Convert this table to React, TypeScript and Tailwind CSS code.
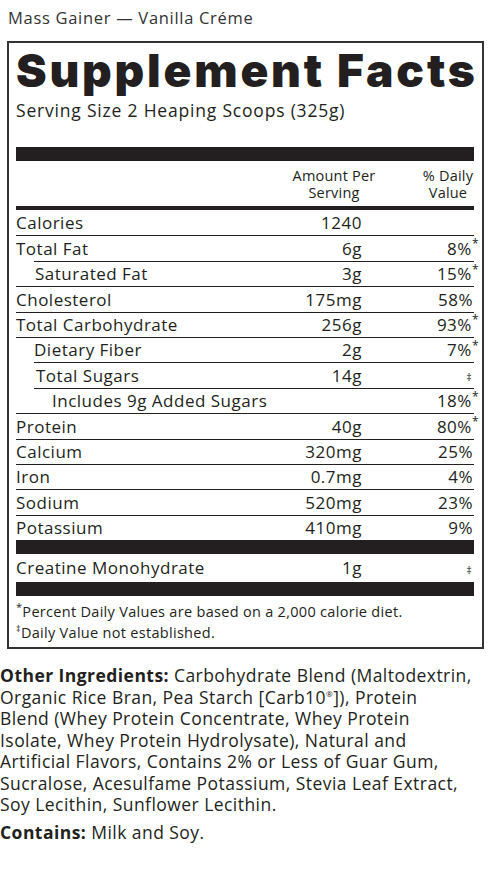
const rows = [
  { label: "Calories", amount: "1240", dv: "", first: true },
  { label: "Total Fat", amount: "6g", dv: "8%", star: true },
  { label: "Saturated Fat", amount: "3g", dv: "15%", star: true, indentLine: true, indent: "pl-px" },
  { label: "Cholesterol", amount: "175mg", dv: "58%" },
  { label: "Total Carbohydrate", amount: "256g", dv: "93%", star: true },
  { label: "Dietary Fiber", amount: "2g", dv: "7%", star: true, indent: "pl-[18px]" },
  { label: "Total Sugars", amount: "14g", dv: "", dagger: true, indentLine: true, indent: "pl-[2px]" },
  { label: "Includes 9g Added Sugars", amount: "", dv: "18%", star: true, indentLine: true, indent: "pl-[18px]" },
  { label: "Protein", amount: "40g", dv: "80%", star: true },
  { label: "Calcium", amount: "320mg", dv: "25%" },
  { label: "Iron", amount: "0.7mg", dv: "4%" },
  { label: "Sodium", amount: "520mg", dv: "23%" },
  { label: "Potassium", amount: "410mg", dv: "9%" },
];

export default function App() {
  return (
    <div className="w-[500px] min-h-[878px] bg-white text-[#231f20]">
      {/* Product name */}
      <div className="h-[41px] pl-2 pt-[7px] text-[16.5px] leading-[22px] tracking-[0.7px] text-[#333] font-['Open_Sans',sans-serif]">
        Mass Gainer — Vanilla Créme
      </div>

      {/* Label */}
      <div className="ml-[7px] w-[477px] border-2 border-[#333] pl-[7px] pr-[8px] font-['Open_Sans',sans-serif] tracking-[0.5px]">
        <h1 className="pt-[4px] text-[46px] leading-[46px] font-black tracking-[2.8px] whitespace-nowrap font-['Inter',sans-serif]">Supplement Facts</h1>
        <p className="mt-[7px] text-[17.5px] leading-[20px] tracking-[0.8px]">Serving Size 2 Heaping Scoops (325g)</p>

        <div className="mt-[27px] h-[14px] bg-[#231f20]" />

        {/* Column header */}
        <div className="flex h-[45px] items-center justify-end text-[14.5px] leading-[17px] tracking-[0.2px]">
          <div className="w-[92px] text-center">Amount Per<br />Serving</div>
          <div className="ml-[42px] w-[52px] text-center">% Daily<br />Value</div>
        </div>
        <div className="h-[4px] bg-[#231f20]" />

        {/* Nutrient rows */}
        {rows.map((r) => (
          <div
            key={r.label}
            className={`flex h-[25.4px] items-center text-[17px] ${r.first ? "" : "border-t border-[#231f20]"} ${r.indentLine ? "ml-[18px]" : ""}`}
          >
            <div className={`flex-1 whitespace-nowrap ${r.indent ?? ""}`}>{r.label}</div>
            <div className="w-[100px] text-right">{r.amount}</div>
            <div className="w-[112px] pr-px text-right">
              {r.dv}
              {r.star && <span className="-mr-[6px] align-super text-[12px] leading-none">*</span>}
              {r.dagger && <span className="mr-[1px] align-middle text-[10px] leading-none">‡</span>}
            </div>
          </div>
        ))}

        <div className="h-[14px] bg-[#231f20]" />
        <div className="flex h-[28px] items-center text-[17px]">
          <div className="flex-1">Creatine Monohydrate</div>
          <div className="w-[100px] text-right">1g</div>
          <div className="w-[112px] pr-[1px] text-right">
            <span className="mr-[1px] text-[10px]">‡</span>
          </div>
        </div>
        <div className="h-[14px] bg-[#231f20]" />

        {/* Footnotes */}
        <div className="pt-[5px] pb-[4px] text-[14.5px] leading-[21px] tracking-[0.3px]">
          <p><span className="align-super text-[11px] leading-none">*</span>Percent Daily Values are based on a 2,000 calorie diet.</p>
          <p><span className="align-super text-[9px] leading-none">‡</span>Daily Value not established.</p>
        </div>
      </div>

      {/* Ingredients */}
      <div className="mt-[16px] whitespace-nowrap text-[17.5px] leading-[21.5px] tracking-[0.45px] text-[#231f20] font-['Open_Sans',sans-serif]">
        <p>
          <span className="font-bold">Other Ingredients:</span> Carbohydrate Blend (Maltodextrin,<br />
          Organic Rice Bran, Pea Starch [Carb10<span className="align-super text-[8px] leading-none">®</span>]), Protein<br />
          Blend (Whey Protein Concentrate, Whey Protein<br />
          Isolate, Whey Protein Hydrolysate), Natural and<br />
          Artificial Flavors, Contains 2% or Less of Guar Gum,<br />
          Sucralose, Acesulfame Potassium, Stevia Leaf Extract,<br />
          Soy Lecithin, Sunflower Lecithin.
        </p>
        <p className="mt-[6px]">
          <span className="font-bold">Contains:</span> Milk and Soy.
        </p>
      </div>
    </div>
  );
}
